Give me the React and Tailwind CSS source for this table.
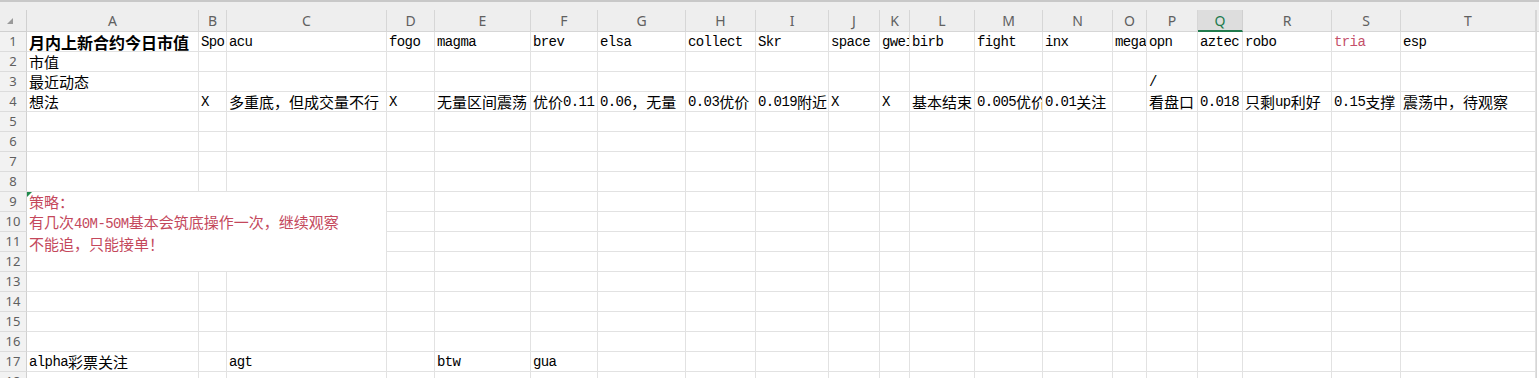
import React from "react";

const COLS = ["A", "B", "C", "D", "E", "F", "G", "H", "I", "J", "K", "L", "M", "N", "O", "P", "Q", "R", "S", "T"];

// sheet content, row number -> { column: text }
const DATA = {
    1: {
        A: "月内上新合约今日市值", B: "Spo", C: "acu", D: "fogo", E: "magma", F: "brev", G: "elsa",
        H: "collect", I: "Skr", J: "space", K: "gwei", L: "birb", M: "fight", N: "inx", O: "mega",
        P: "opn", Q: "aztec", R: "robo", S: "tria", T: "esp",
    },
    2: {A: "市值"},
    3: {A: "最近动态", P: "/"},
    4: {
        A: "想法", B: "X", C: "多重底，但成交量不行", D: "X", E: "无量区间震荡", F: "优价0.11",
        G: "0.06，无量", H: "0.03优价", I: "0.019附近", J: "X", K: "X", L: "基本结束",
        M: "0.005优价", N: "0.01关注", P: "看盘口", Q: "0.018", R: "只剩up利好", S: "0.15支撑",
        T: "震荡中，待观察",
    },
    17: {A: "alpha彩票关注", C: "agt", E: "btw", F: "gua"},
};

const CJK = /([\u3000-\u303f\u4e00-\u9fff\uff00-\uffef]+)/;

// split text into CJK / latin runs so each gets its own font
function Txt({t, bold}) {
    return t.split(CJK).filter(Boolean).map((part, i) =>
        CJK.test(part) ? (
            <span key={i}
                  className={bold
                      ? "font-[Noto_Sans_CJK_SC,sans-serif] text-[16px] font-bold"
                      : "font-[Noto_Sans_CJK_SC,sans-serif] text-[15px]"}>
                {part}
            </span>
        ) : (
            <span key={i}
                  className="font-[Liberation_Mono,Noto_Sans_CJK_SC,monospace] text-[14px] tracking-[-0.6px]">
                {part}
            </span>
        )
    );
}

function Cell({text, row, col}) {
    const red = row === 1 && col === "S";
    return (
        <div
            className={`border-r border-b border-[#e2e2e2] bg-white overflow-hidden whitespace-nowrap flex items-center pl-[2px] leading-none ${red ? "text-[#c4506a]" : "text-black"}`}>
            {text ? <Txt t={text} bold={row === 1 && col === "A"}/> : null}
        </div>
    );
}

function RowHeader({n}) {
    return (
        <div
            className="border-r border-b border-r-[#d0d0d0] border-b-[#dcdcdc] bg-[#f2f2f2] flex items-center justify-center font-[Noto_Sans,sans-serif] text-[13px] text-[#5f5f5f]">
            {n}
        </div>
    );
}

function StrategyCell() {
    return (
        <div
            className="relative col-span-3 row-span-4 border-r border-b border-[#e2e2e2] bg-white pl-[2px] text-[#c4485c] leading-[20px]">
            <svg className="absolute left-0 top-0" width="5" height="5" viewBox="0 0 5 5">
                <polygon points="0,0 5,0 0,5" fill="#1f8a4c"/>
            </svg>
            <div><Txt t="策略："/></div>
            <div><Txt t="有几次40M-50M基本会筑底操作一次，继续观察"/></div>
            <div><Txt t="不能追，只能接单！"/></div>
        </div>
    );
}

function App() {
    const rows = [];
    for (let r = 1; r <= 18; r++) {
        rows.push(<RowHeader key={`h${r}`} n={r}/>);
        COLS.forEach(c => {
            if (r >= 9 && r <= 12 && (c === "A" || c === "B" || c === "C")) {
                if (r === 9 && c === "A") rows.push(<StrategyCell key="merge"/>);
                return;
            }
            rows.push(<Cell key={`${c}${r}`} text={DATA[r]?.[c]} row={r} col={c}/>);
        });
        rows.push(<div key={`e${r}`} className="border-l border-[#d6d6d6] bg-white"/>);
    }

    return (
        <div className="w-[1539px] h-[378px] overflow-hidden bg-white">
            <div className="h-[10px] bg-[#eeeeee] border-t-2 border-[#c8c8c8]"/>
            <div
                className="grid grid-cols-[27px_172px_28px_160px_48px_96px_67px_88px_70px_73px_51px_30px_65px_68px_70px_34px_51px_45px_89px_69px_135px_3px] grid-rows-[22px] auto-rows-[20px]">
                {/* corner */}
                <div className="relative bg-[#eeeeee] border-r border-b border-[#d0d0d0]">
                    <svg className="absolute left-[7px] top-[8px]" width="6" height="6" viewBox="0 0 6 6">
                        <polygon points="6,0 6,6 0,6" fill="#9a9a9a"/>
                    </svg>
                </div>
                {COLS.map(c => (
                    c === "Q" ? (
                        <div key={c}
                             className="bg-[#dddddd] border-r border-[#d0d0d0] border-b-2 border-b-[#217a4d] flex items-center justify-center font-[Noto_Sans,sans-serif] text-[14px] text-[#217a4d]">
                            {c}
                        </div>
                    ) : (
                        <div key={c}
                             className="bg-[#eeeeee] border-r border-b border-[#d6d6d6] flex items-center justify-center font-[Noto_Sans,sans-serif] text-[14px] text-[#606060]">
                            {c}
                        </div>
                    )
                ))}
                <div className="bg-[#eeeeee] border-l border-b border-[#d6d6d6]"/>
                {rows}
            </div>
        </div>
    );
}

export default App;
